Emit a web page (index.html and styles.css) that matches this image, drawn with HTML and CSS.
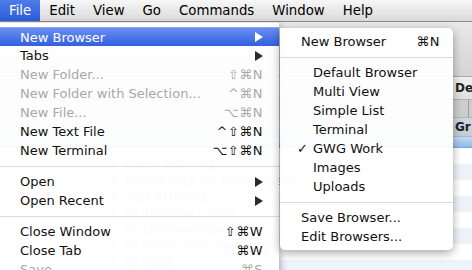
FILE: index.html
```html
<!DOCTYPE html>
<html lang="en">
<head>
  <meta charset="UTF-8">
  <title>File menu</title>
  <link rel="stylesheet" href="styles.css">
</head>
<body>

  <div class="menubar">
    <span class="mb-item active">File</span>
    <span class="mb-item">Edit</span>
    <span class="mb-item">View</span>
    <span class="mb-item">Go</span>
    <span class="mb-item">Commands</span>
    <span class="mb-item">Window</span>
    <span class="mb-item">Help</span>
  </div>

  <div class="desk">
    <!-- window sitting behind the menus -->
    <div class="win">
      <div class="win-top"></div>
      <div class="win-bar">
        <span class="btn">De</span>
      </div>
      <div class="win-bar dark"><span class="split"></span></div>
      <div class="win-bar blue">
        <span class="btn flat">Gr</span>
      </div>
      <div class="win-head"></div>
      <div class="tree">
        <div class="tree-row"><span class="tw">▼</span>Code AtBase2</div>
        <div class="tree-row"><span class="tw">▼</span>Comments for Developers</div>
        <div class="tree-row"><span class="tw">▼</span>Test AtBase2</div>
        <div class="tree-row"><span class="tw">▶</span><span class="fold"></span>dropbox cache</div>
        <div class="tree-row"><span class="tw"></span><span class="fold"></span>1PasswordSync</div>
        <div class="tree-row"><span class="tw">▶</span><span class="fold"></span>Application Syncing</div>
        <div class="tree-row"><span class="tw">▶</span><span class="fold"></span>Apps</div>
      </div>
    </div>

    <div class="menu main">
      <div class="row hl"><span>New Browser</span><i class="arrow"></i></div>
      <div class="row"><span>Tabs</span><i class="arrow"></i></div>
      <div class="row off"><span>New Folder...</span><span class="key">⇧⌘N</span></div>
      <div class="row off"><span>New Folder with Selection...</span><span class="key">^⌘N</span></div>
      <div class="row off"><span>New File...</span><span class="key">⌥⌘N</span></div>
      <div class="row"><span>New Text File</span><span class="key">^⇧⌘N</span></div>
      <div class="row"><span>New Terminal</span><span class="key">⌥⇧⌘N</span></div>
      <div class="sep"></div>
      <div class="row"><span>Open</span><i class="arrow"></i></div>
      <div class="row"><span>Open Recent</span><i class="arrow"></i></div>
      <div class="sep"></div>
      <div class="row"><span>Close Window</span><span class="key">⇧⌘W</span></div>
      <div class="row"><span>Close Tab</span><span class="key">⌘W</span></div>
      <div class="row off"><span>Save</span><span class="key">⌘S</span></div>
    </div>

    <div class="menu sub">
      <div class="row"><span>New Browser</span><span class="key">⌘N</span></div>
      <div class="sep"></div>
      <div class="row ind"><span class="check"></span><span>Default Browser</span></div>
      <div class="row ind"><span class="check"></span><span>Multi View</span></div>
      <div class="row ind"><span class="check"></span><span>Simple List</span></div>
      <div class="row ind"><span class="check"></span><span>Terminal</span></div>
      <div class="row ind"><span class="check">✓</span><span>GWG Work</span></div>
      <div class="row ind"><span class="check"></span><span>Images</span></div>
      <div class="row ind"><span class="check"></span><span>Uploads</span></div>
      <div class="sep"></div>
      <div class="row"><span>Save Browser...</span></div>
      <div class="row"><span>Edit Browsers...</span></div>
    </div>
  </div>

</body>
</html>
```

FILE: styles.css
```css
:root {
  --ink: #111;
  --off: #a8a8a8;
  --blue-top: #6a8ef0;
  --blue-bot: #3160e0;
}

html, body {
  margin: 0;
  padding: 0;
}

body {
  width: 472px;
  height: 270px;
  overflow: hidden;
  background: #fff;
  font-family: "DejaVu Sans", "Liberation Sans", sans-serif;
  font-size: 13px;
  color: var(--ink);
}

/* top menu bar */
.menubar {
  display: flex;
  height: 21px;
  background: linear-gradient(#f7f7f7, #d9d9d9);
  border-bottom: 1px solid #8c8c8c;
  font-size: 13.3px;
}

.mb-item {
  display: flex;
  align-items: center;
  padding: 0 9px;
  color: #000;
}

.mb-item.active {
  background: linear-gradient(#4f7ee8, #2a5ad9);
  color: #fff;
}

.desk {
  position: relative;
  height: 248px;
}

/* the window behind */
.win {
  display: flex;
  flex-direction: column;
  height: 100%;
}

.win-top {
  height: 54px;
  background: linear-gradient(#e9e9e9, #d4d4d4);
  border-bottom: 1px solid #a9a9a9;
}

.win-bar {
  height: 22px;
  display: flex;
  align-items: center;
  justify-content: flex-end;
  background: linear-gradient(#dcdcdc, #cfcfcf);
  border-bottom: 1px solid #b4b4b4;
}

.win-bar.dark {
  height: 17px;
  background: #cdcdcd;
}

.win-bar.blue {
  height: 18px;
  background: linear-gradient(#cfd6e0, #c3ccd8);
}

.split {
  width: 1px;
  height: 100%;
  background: #9e9e9e;
  margin-right: 3px;
}

.btn {
  width: 17px;
  height: 100%;
  display: flex;
  align-items: center;
  padding-left: 5px;
  border-left: 1px solid #a8a8a8;
  background: linear-gradient(#f0f0f0, #dedede);
  font-weight: bold;
  font-size: 12px;
  color: #222;
}

.btn.flat {
  background: none;
}

.win-head {
  height: 10px;
  background: linear-gradient(#c4dcf5, #8fbbe9);
  border-bottom: 1px solid #7ea8d8;
}

.tree {
  flex: 1;
  padding-top: 8px;
  background: repeating-linear-gradient(#fff 0 16px, #eef3fb 16px 32px);
}

.tree-row {
  height: 16px;
  display: flex;
  align-items: center;
  padding-left: 111px;
  font-size: 13px;
  color: #999;
}

.tw {
  width: 14px;
  font-size: 8px;
  color: #aaa;
}

.fold {
  width: 12px;
  height: 9px;
  margin-right: 4px;
  background: #c4d6ec;
  border-radius: 1px;
}

/* menus */
.menu {
  position: absolute;
  padding: 4px 0;
  background: rgba(255, 255, 255, 0.95);
}

.menu.main {
  left: 0;
  top: 0;
  width: 279px;
  height: 260px;
  border-top: 1px solid #e2e2e2;
  box-shadow: 2px 3px 6px rgba(0, 0, 0, 0.28);
}

.menu.sub {
  left: 280px;
  top: 6px;
  width: 173px;
  border-radius: 0 5px 5px 5px;
  box-shadow: 0 3px 10px rgba(0, 0, 0, 0.35);
}

.row {
  height: 19px;
  display: flex;
  align-items: center;
  justify-content: space-between;
  padding: 0 16px 0 20px;
  white-space: nowrap;
}

.sub .row {
  padding: 0 13px 0 21px;
}

.sub .row.ind {
  justify-content: flex-start;
  padding-left: 17px;
}

.check {
  width: 16px;
}

.row.off {
  color: var(--off);
}

.row.hl {
  background: linear-gradient(var(--blue-top), var(--blue-bot));
  border-top: 1px solid #88a6f2;
  height: 18px;
  color: #fff;
}

.key {
  letter-spacing: 0.5px;
}

.arrow {
  width: 0;
  height: 0;
  border-left: 8px solid #2b2b2b;
  border-top: 5px solid transparent;
  border-bottom: 5px solid transparent;
}

.hl .arrow {
  border-left-color: #fff;
}

.sep {
  height: 12px;
  display: flex;
  align-items: center;
}

.sep::before {
  content: "";
  flex: 1;
  height: 1px;
  background: #dcdcdc;
}
```
